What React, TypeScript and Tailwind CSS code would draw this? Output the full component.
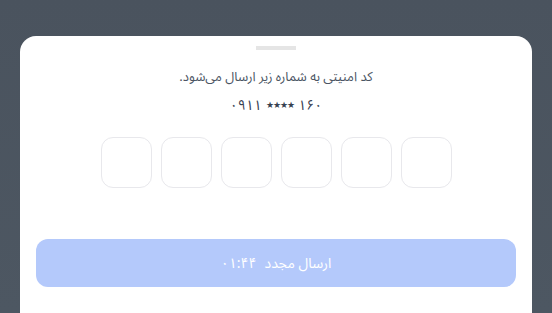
import React from 'react';

const digits = [0, 1, 2, 3, 4, 5];

export default function App() {
  return (
    <div
      dir="rtl"
      className="h-[313px] w-full overflow-hidden bg-gradient-to-b from-[#4a535e] to-[#4d5762] px-5 pt-9"
      style={{ fontFamily: "'Noto Sans Arabic', 'DejaVu Sans', sans-serif" }}
    >
      <div className="flex h-[300px] flex-col items-center rounded-t-2xl bg-white px-4 pt-[10px]">
        {/* drag handle */}
        <div className="h-1 w-10 bg-[#e5e5e5]" />

        <p className="mt-[17px] text-[13px] leading-5 text-[#4b5563]">
          کد امنیتی به شماره زیر ارسال می‌شود.
        </p>
        <p dir="ltr" className="mt-[9px] flex items-center gap-1 text-[14px] leading-5 text-[#374151]">
          <span>۰۹۱۱</span>
          <span className="text-[9px] tracking-[-1px]">★★★★</span>
          <span>۱۶۰</span>
        </p>

        {/* code inputs */}
        <div dir="ltr" className="mt-[21px] flex gap-[9px]">
          {digits.map(i => (
            <div
              key={i}
              className="h-[51px] w-[51px] rounded-xl border border-[#e8e8ec] bg-white"
            />
          ))}
        </div>

        <button className="mt-[51px] flex h-12 w-full items-center justify-center gap-2 rounded-xl bg-[#b4c9fb] text-[14px] text-white">
          <span>ارسال مجدد</span>
          <span>۰۱:۴۴</span>
        </button>
      </div>
    </div>
  );
}
